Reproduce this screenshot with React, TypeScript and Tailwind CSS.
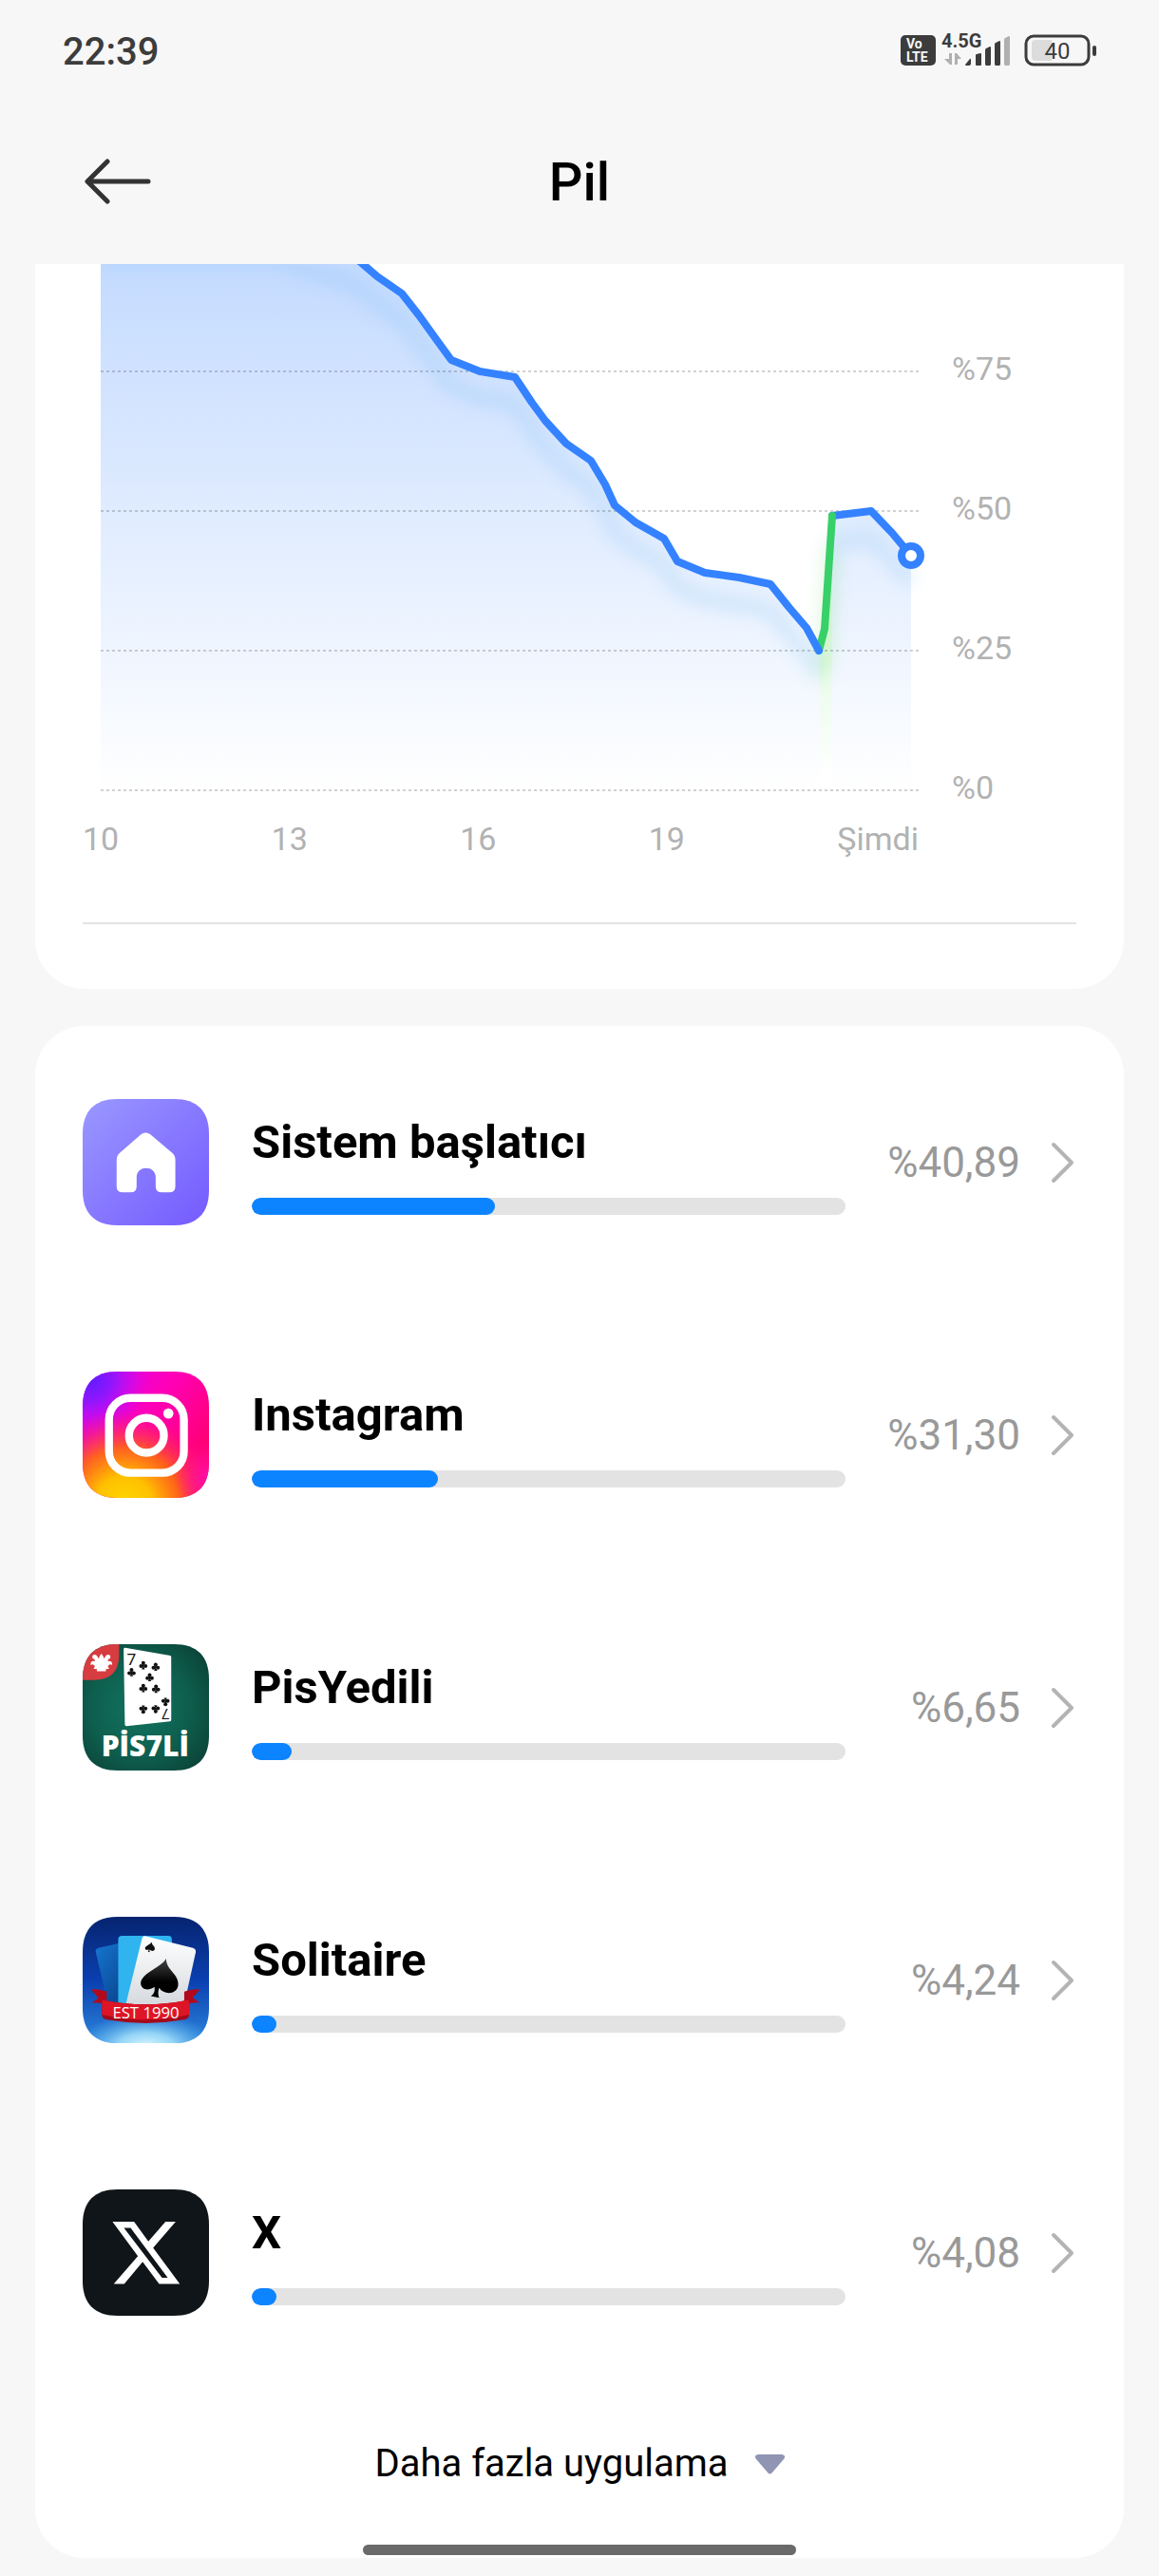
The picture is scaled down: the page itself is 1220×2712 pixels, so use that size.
import type { ReactNode } from "react";

interface AppUsage {
  name: string;
  percent: number;
  label: string;
  icon: ReactNode;
}

type Point = [number, number];

const DISCHARGE: Point[] = [
  [0, -34], [184, -34], [224, -20], [270, -5], [291, 13], [317, 31], [335, 54], [353, 79],
  [369, 101], [399, 113], [436, 119], [454, 146], [468, 165], [490, 189], [516, 207],
  [531, 232], [541, 254], [563, 272], [593, 289], [607, 313], [636, 325], [672, 330],
  [705, 337], [725, 362], [743, 383], [756, 407],
];
const CHARGE: Point[] = [[756, 407], [762, 384], [770, 265]];
const LATEST: Point[] = [[770, 265], [811, 260], [833, 283], [853, 307]];
const BASELINE = 554;

const line = (points: Point[]) => "M" + points.map((p) => p.join(" ")).join("L");
const area = (points: Point[]) =>
  `${line(points)}L${points[points.length - 1][0]} ${BASELINE}L${points[0][0]} ${BASELINE}Z`;

function StatusBar() {
  return (
    <div className="flex h-[106px] items-center justify-between px-[66px] text-[#3c3c3c]">
      <time className="pt-1 text-[40px] leading-none font-medium">22:39</time>
      <svg width="206" height="50" viewBox="0 -8 206 50" role="img" aria-label="VoLTE, 4.5G, 40">
        <rect x="0" y="1" width="37" height="32" rx="5" fill="#3c3c3c" />
        <g fill="#f7f7f7" fontWeight="700">
          <text x="6" y="15" fontSize="14">Vo</text>
          <text x="6" y="29" fontSize="14">LTE</text>
        </g>
        <text x="43" y="14" fontSize="20" fontWeight="700" fill="#3c3c3c">4.5G</text>
        {/* data arrows */}
        <g fill="#b0b0b0">
          <path d="M51 20h3v12h-2l-6-6h5z" />
          <path d="M57 32h3v-6h4l-5-6h-2z" />
        </g>
        <g fill="#3c3c3c">
          <path d="M68 32l5-6q1-1 1 1v4q0 2-2 2h-3q-1 0-1-1z" />
          <path d="M79 22q0-1 1-1l4-1q1 0 1 1v11q0 1-1 1h-4q-1 0-1-1z" />
          <path d="M89 17q0-2 1-2l4-2q1 0 1 1v17q0 2-1 2h-4q-1 0-1-2z" />
          <path d="M99 11q0-2 1-2l4-2q1 0 1 1v23q0 2-1 2h-4q-1 0-1-2z" />
        </g>
        <path d="M109 6q0-2 1-2l4-2q1 0 1 1v28q0 2-1 2h-4q-1 0-1-2z" fill="#b0b0b0" />
        <rect x="132" y="2" width="66" height="30" rx="8" fill="none" stroke="#3c3c3c" strokeWidth="3" />
        <path d="M159 6h-17q-4 0-4 4v14q0 4 4 4h17z" fill="#dcdcdc" />
        <rect x="202" y="12" width="4" height="11" rx="2" fill="#3c3c3c" />
        <text x="165" y="26" fontSize="24" textAnchor="middle" fill="#3c3c3c">40</text>
      </svg>
    </div>
  );
}

function Header() {
  return (
    <header className="bg-[#f7f7f7]">
      <StatusBar />
      <div className="grid h-[172px] grid-cols-[1fr_auto_1fr] items-center px-[87px]">
        <button aria-label="Geri" className="justify-self-start">
          <svg width="72" height="50" viewBox="0 0 72 50" fill="none" stroke="#333" strokeWidth="5" strokeLinecap="round" strokeLinejoin="round">
            <path d="M26 3L5 24L26 45M6 24H69" />
          </svg>
        </button>
        <h1 className="text-[56px] leading-none font-medium text-black">Pil</h1>
      </div>
    </header>
  );
}

function BatteryChart() {
  return (
    <section className="rounded-b-[52px] bg-white px-[50px] pb-[68px]">
      <div className="flex items-start gap-7 pl-[19px]">
        <svg viewBox="0 0 868 556" className="min-w-0 flex-1" role="img" aria-label="Pil seviyesi">
          <defs>
            <linearGradient id="blueArea" gradientUnits="userSpaceOnUse" x1="0" y1="-34" x2="0" y2="554">
              <stop offset="0" stopColor="#3482ff" stopOpacity="0.31" />
              <stop offset="1" stopColor="#3482ff" stopOpacity="0" />
            </linearGradient>
            <linearGradient id="greenArea" gradientUnits="userSpaceOnUse" x1="0" y1="265" x2="0" y2="540">
              <stop offset="0" stopColor="#5de35d" stopOpacity="0.32" />
              <stop offset="1" stopColor="#5de35d" stopOpacity="0" />
            </linearGradient>
            <filter id="glow" filterUnits="userSpaceOnUse" x="-60" y="-80" width="980" height="640">
              <feGaussianBlur stdDeviation="9" />
            </filter>
          </defs>
          <path d={area(DISCHARGE)} fill="url(#blueArea)" />
          <path d={area(CHARGE)} fill="url(#greenArea)" />
          <path d={area(LATEST)} fill="url(#blueArea)" />
          <g fill="none" strokeWidth="14" opacity="0.2" filter="url(#glow)" transform="translate(0 28)">
            <path d={line(DISCHARGE)} stroke="#5aaee8" />
            <path d={line(CHARGE)} stroke="#4bd04b" />
            <path d={line(LATEST)} stroke="#5aaee8" />
          </g>
          <g stroke="#000" strokeOpacity="0.18" strokeWidth="2" strokeDasharray="3 3">
            <path d="M0 113H861" />
            <path d="M0 260H861" />
            <path d="M0 407H861" />
            <path d="M0 554H861" />
          </g>
          <g fill="none" strokeWidth="8" strokeLinecap="round" strokeLinejoin="round">
            <path d={line(LATEST)} stroke="#3482ff" />
            <path d={line(CHARGE)} stroke="#38d068" />
            <path d={line(DISCHARGE)} stroke="#3482ff" />
          </g>
          <circle cx="853" cy="307" r="10" fill="#fff" stroke="#3482ff" strokeWidth="8" />
        </svg>
        <div className="w-[131px] pt-[37px] text-[34px] leading-[147px] text-[#b2b2b2]">
          <div>%75</div>
          <div>%50</div>
          <div>%25</div>
          <div>%0</div>
        </div>
      </div>
      <div className="-mt-10 mr-[166px] grid grid-cols-[1fr_1fr_1fr_1fr_auto] text-[34px] leading-10 text-[#b2b2b2]">
        <span>10</span>
        <span>13</span>
        <span>16</span>
        <span>19</span>
        <span>Şimdi</span>
      </div>
      <hr className="mt-[68px] border-t-2 border-[#e3e3e3]" />
    </section>
  );
}

function IconFrame({ id, children }: { id: string; children: ReactNode }) {
  return (
    <svg viewBox="0 0 398 398" className="size-[133px] shrink-0" aria-hidden="true">
      <clipPath id={id}>
        <path d="M110 0H288C360 0 398 38 398 110V288C398 360 360 398 288 398H110C38 398 0 360 0 288V110C0 38 38 0 110 0Z" />
      </clipPath>
      <g clipPath={`url(#${id})`}>{children}</g>
    </svg>
  );
}

function LauncherIcon() {
  return (
    <IconFrame id="launcherClip">
      <linearGradient id="launcherBg" x1="0" y1="0" x2="1" y2="1">
        <stop offset="0" stopColor="#9a98ff" />
        <stop offset="1" stopColor="#745aff" />
      </linearGradient>
      <rect width="398" height="398" fill="url(#launcherBg)" />
      <path
        d="M183 112Q198 100 214 112L282 170Q292 179 292 192V275Q292 294 273 294H249Q230 294 230 275V247C230 208 170 208 170 247V275Q170 294 151 294H126Q107 294 107 275V192Q107 179 117 170Z"
        fill="#fff"
      />
    </IconFrame>
  );
}

function InstagramIcon() {
  return (
    <IconFrame id="instaClip">
      <linearGradient id="instaBase" x1="0" y1="0" x2="1" y2="0.7">
        <stop offset="0" stopColor="#d400f5" />
        <stop offset="0.5" stopColor="#ff00b8" />
        <stop offset="1" stopColor="#ff0068" />
      </linearGradient>
      <radialGradient id="instaViolet" gradientUnits="userSpaceOnUse" cx="20" cy="20" r="190">
        <stop offset="0" stopColor="#5a1cff" />
        <stop offset="0.4" stopColor="#8a18ff" stopOpacity="0.9" />
        <stop offset="1" stopColor="#d010ff" stopOpacity="0" />
      </radialGradient>
      <radialGradient id="instaYellow" gradientUnits="userSpaceOnUse" cx="130" cy="420" r="300">
        <stop offset="0" stopColor="#ffd800" />
        <stop offset="0.3" stopColor="#ffc000" />
        <stop offset="0.6" stopColor="#ff6a10" stopOpacity="0.9" />
        <stop offset="1" stopColor="#ff1070" stopOpacity="0" />
      </radialGradient>
      <radialGradient id="instaPink" gradientUnits="userSpaceOnUse" cx="410" cy="340" r="120">
        <stop offset="0" stopColor="#ff10b0" />
        <stop offset="1" stopColor="#ff10b0" stopOpacity="0" />
      </radialGradient>
      <rect width="398" height="398" fill="url(#instaBase)" />
      <rect width="398" height="398" fill="url(#instaViolet)" />
      <rect width="398" height="398" fill="url(#instaYellow)" />
      <rect width="398" height="398" fill="url(#instaPink)" />
      <g fill="none" stroke="#fff" strokeWidth="25">
        <rect x="83" y="83" width="236" height="236" rx="68" />
        <circle cx="201" cy="201" r="55" />
      </g>
      <circle cx="270" cy="132" r="16" fill="#fff" />
    </IconFrame>
  );
}

function Club({ x, y, flip }: { x: number; y: number; flip?: boolean }) {
  return (
    <g transform={`translate(${x} ${y}) scale(${flip ? -1 : 1})`}>
      <circle cx="0" cy="-7" r="6" />
      <circle cx="-7" cy="3" r="6" />
      <circle cx="7" cy="3" r="6" />
      <path d="M-3 -4H3L2 6L5 13H-5L-2 6Z" />
    </g>
  );
}

function PisYediliIcon() {
  return (
    <IconFrame id="pisClip">
      <radialGradient id="pisBg" cx="0.45" cy="0.5" r="0.65">
        <stop offset="0" stopColor="#117560" />
        <stop offset="0.6" stopColor="#0e5e4e" />
        <stop offset="1" stopColor="#0b4539" />
      </radialGradient>
      <rect width="398" height="398" fill="url(#pisBg)" />
      <path d="M0 0H115V33Q115 113 35 113H0Z" fill="#d63c40" />
      {/* joker hat */}
      <path
        d="M59 30Q65 36 68 46Q74 30 84 34Q90 38 86 46Q80 44 79 54Q94 50 93 66Q86 60 80 68Q78 72 84 76Q78 80 74 77L73 85H45L44 77Q40 80 34 76Q40 72 38 68Q32 60 25 66Q24 50 39 54Q38 44 32 46Q28 38 34 34Q44 30 50 46Q53 36 59 30Z"
        fill="#fff"
      />
      <path d="M134 11L276 36Q279 37 279 40V239Q279 243 275 243L138 258Q133 258 133 253L129 16Q129 10 134 11Z" fill="#fff" />
      <g fill="#111">
        <Club x={154} y={88} />
        <Club x={191} y={66} />
        <Club x={230} y={71} />
        <Club x={211} y={104} />
        <Club x={191} y={138} />
        <Club x={231} y={140} />
        <Club x={191} y={206} flip />
        <Club x={230} y={205} flip />
        <Club x={261} y={182} flip />
        <g className="font-['Liberation_Sans_Narrow','Roboto',sans-serif]" fontSize="52" textAnchor="middle">
          <text x="154" y="67">7</text>
          <text x="-261" y="-202" fontSize="46" transform="rotate(180)">7</text>
        </g>
      </g>
      <text x="197" y="353" textAnchor="middle" fontSize="90" fontWeight="800" fill="#fff" className="font-['Open_Sans',sans-serif]">
        PİS7Lİ
      </text>
    </IconFrame>
  );
}

function SolitaireIcon() {
  const spade =
    "M263 131C252 158 186 176 183 208C182 228 206 236 226 221C228 234 226 242 215 250L241 255C236 244 238 234 241 224C256 248 298 246 301 215C304 180 262 168 263 131Z";
  return (
    <IconFrame id="soliClip">
      <linearGradient id="soliBg" x1="0" y1="0" x2="0" y2="1">
        <stop offset="0" stopColor="#06246f" />
        <stop offset="0.5" stopColor="#0a3fb0" />
        <stop offset="1" stopColor="#2c86dc" />
      </linearGradient>
      <radialGradient id="soliLight" gradientUnits="userSpaceOnUse" cx="200" cy="410" r="220" gradientTransform="matrix(1 0 0 0.5 0 205)">
        <stop offset="0" stopColor="#dff8ff" />
        <stop offset="0.4" stopColor="#a8e4fc" stopOpacity="0.85" />
        <stop offset="1" stopColor="#58b4f0" stopOpacity="0" />
      </radialGradient>
      <linearGradient id="soliBack" x1="0" y1="0" x2="0.6" y2="1">
        <stop offset="0" stopColor="#1676d2" />
        <stop offset="1" stopColor="#0b4c98" />
      </linearGradient>
      <linearGradient id="soliFront" x1="0" y1="0" x2="0" y2="1">
        <stop offset="0" stopColor="#fff" />
        <stop offset="1" stopColor="#d6dade" />
      </linearGradient>
      <linearGradient id="soliSpade" x1="0" y1="0" x2="0" y2="1">
        <stop offset="0" stopColor="#444" />
        <stop offset="0.6" stopColor="#000" />
      </linearGradient>
      <rect width="398" height="398" fill="url(#soliBg)" />
      <rect width="398" height="398" fill="url(#soliLight)" />
      <path d="M50 98L120 82V275H80L41 110Q40 101 50 98Z" fill="url(#soliBack)" />
      <path d="M124 60H270Q281 60 281 72V275H112V72Q112 60 124 60Z" fill="#2fb4f0" />
      <path d="M200 61L347 98Q358 101 356 112L320 275H136L187 68Q190 59 200 61Z" fill="url(#soliFront)" />
      <path d={spade} fill="url(#soliSpade)" />
      <path d={spade} fill="#111" transform="translate(149 45) scale(0.26)" />
      <g fill="#b3091c">
        <path d="M27 229Q52 226 76 236V278Q54 268 29 271L50 256Z" />
        <path d="M370 229Q344 226 320 236V278Q346 268 369 271L346 254Z" />
      </g>
      <path d="M61 262Q198 290 335 262V312Q332 322 320 324Q198 346 76 324Q64 322 61 312Z" fill="#a50a1a" />
      <path d="M61 262Q198 290 335 262V308Q198 340 61 308Z" fill="#de1526" />
      <text x="199" y="319" textAnchor="middle" fontSize="50" fontWeight="500" fill="#fff" className="font-['Open_Sans',sans-serif]">
        EST 1990
      </text>
    </IconFrame>
  );
}

function XIcon() {
  return (
    <IconFrame id="xClip">
      <rect width="398" height="398" fill="#0f1519" />
      <path
        d="M94 102H162L207 164L261 102H293L222 184L306 298H241L189 228L131 298H98L174 210ZM130 121L250 278H268L151 121Z"
        fill="#fff"
        fillRule="evenodd"
      />
    </IconFrame>
  );
}

const APPS: AppUsage[] = [
  { name: "Sistem başlatıcı", percent: 40.89, label: "%40,89", icon: <LauncherIcon /> },
  { name: "Instagram", percent: 31.3, label: "%31,30", icon: <InstagramIcon /> },
  { name: "PisYedili", percent: 6.65, label: "%6,65", icon: <PisYediliIcon /> },
  { name: "Solitaire", percent: 4.24, label: "%4,24", icon: <SolitaireIcon /> },
  { name: "X", percent: 4.08, label: "%4,08", icon: <XIcon /> },
];

function UsageRow({ app }: { app: AppUsage }) {
  return (
    <li>
      <button className="flex h-[287px] w-full items-center text-left">
        {app.icon}
        <div className="ml-[45px] h-[133px] min-w-0 flex-1 pt-4">
          <div className="truncate text-[49px] leading-[60px] font-bold text-black">{app.name}</div>
          <div className="mt-7 h-[18px] overflow-hidden rounded-full bg-[#e3e3e3]">
            <div className="h-full rounded-full bg-[#0d84ff]" style={{ width: `${app.percent}%` }} />
          </div>
        </div>
        <div className="flex w-[243px] items-center justify-end gap-8">
          <span className="text-[44px] leading-none text-[#999]">{app.label}</span>
          <svg width="27" height="44" viewBox="0 0 27 44" fill="none" stroke="#b4b4b4" strokeWidth="4" strokeLinecap="round" strokeLinejoin="round">
            <path d="M3 3L22 22L3 41" />
          </svg>
        </div>
      </button>
    </li>
  );
}

export default function App() {
  return (
    <div className="min-h-screen bg-[#f7f7f7] font-['Roboto',sans-serif]">
      <Header />
      <main className="px-[37px] pb-[19px]">
        <BatteryChart />
        <section className="mt-[39px] rounded-[52px] bg-white px-[50px] pb-[20px]">
          <ul>
            {APPS.map((app) => (
              <UsageRow key={app.name} app={app} />
            ))}
          </ul>
          <button className="flex h-[158px] w-full items-center justify-center gap-7 text-[40px] leading-none text-black">
            Daha fazla uygulama
            <svg width="31" height="21" viewBox="0 0 31 21" fill="#9095b3">
              <path d="M3 0H28Q33 1 30 5L18 19Q15 22 13 19L1 5Q-2 1 3 0Z" />
            </svg>
          </button>
        </section>
      </main>
      {/* Gesture bar */}
      <div className="fixed bottom-[22px] left-1/2 h-[11px] w-[456px] -translate-x-1/2 rounded-full bg-[#6a6a6a]" />
    </div>
  );
}
